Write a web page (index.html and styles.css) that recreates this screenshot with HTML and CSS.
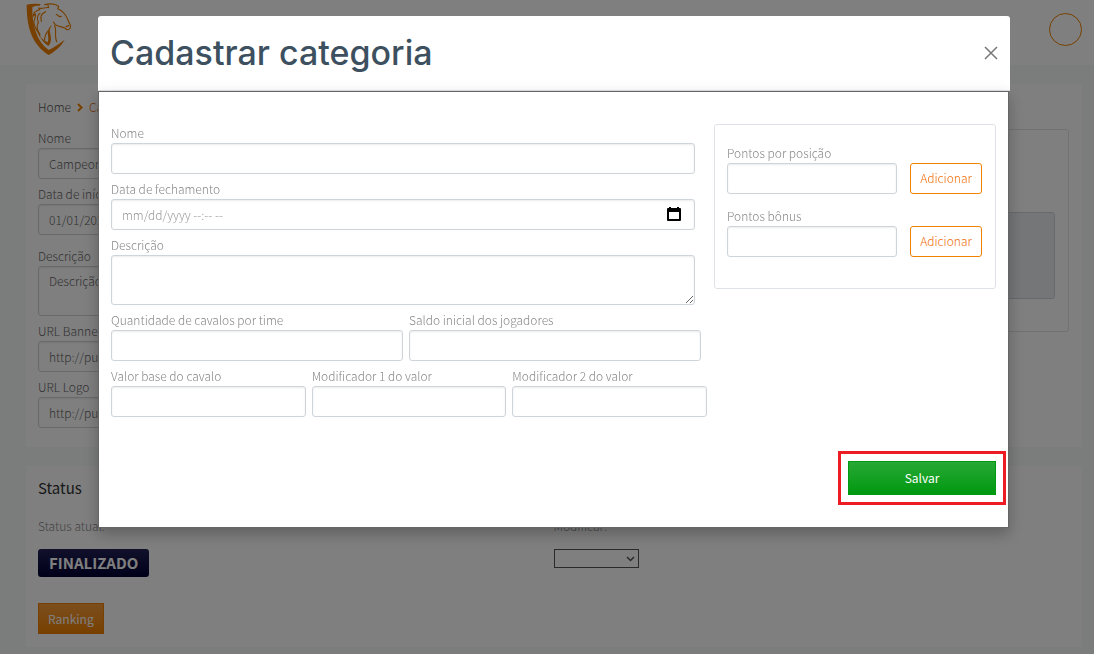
FILE: index.html
```html
<!DOCTYPE html>
<html lang="pt-BR">
<head>
<meta charset="utf-8">
<title>Cadastrar categoria</title>
<link rel="stylesheet" href="styles.css">
</head>
<body>
<div class="page">
  <header class="topbar">
    <svg class="logo" viewBox="6 9 138 156" fill="none" aria-hidden="true">
      <path fill="#f08000" d="M8 14Q24 10 50 12L47 17C36 17 31 18 25 22C24 75 38 125 74 150C90 142 105 131 122 119C111 140 92 155 74 165C28 135 8 90 8 14Z"/>
      <path fill="#f08000" d="M48 109C53 122 62 131 73 138C83 128 82 113 78 98C76 89 79 82 85 76C80 77 74 84 72 93C70 106 76 117 71 127C62 123 54 116 48 109Z"/>
      <path stroke="#f08000" stroke-width="3.500" stroke-linejoin="round" stroke-linecap="round" d="M62 14C78 10 96 12 104 19L101 26C115 32 125 42 130 56L139 76C141 83 137 90 129 89L122 84C112 79 102 80 94 74L88 66M48 109C44 97 31 84 30 68C29 58 37 50 34 42L27 49C28 37 36 32 47 29L44 24C56 29 63 20 74 23L72 16M48 40C34 49 42 60 43 68C36 78 40 94 48 103M65 35C48 42 50 54 52 64M97 43L107 50L112 49M126 80L134 77M92 77C99 91 90 106 98 125M72 93C62 104 61 113 62 120"/>
    </svg>
    <div class="avatar"></div>
  </header>
  <main class="content">
    <section class="card">
      <nav class="crumbs">
        <a class="crumb" href="#">Home</a>
        <svg class="chevron" viewBox="0 0 6 9" fill="none" stroke="#f08000" stroke-width="2"><path d="M1 1L4.500 4.500L1 8"/></svg>
        <a class="crumb crumb-current" href="#">Campeonatos</a>
      </nav>
      <div class="champ-grid">
        <div class="fields">
          <div class="field"><label for="c-nome">Nome</label><input id="c-nome" class="control" value="Campeonato"></div>
          <div class="field field-spaced"><label for="c-data">Data de início</label><input id="c-data" class="control" value="01/01/2022"></div>
          <div class="field"><label for="c-desc">Descrição</label><textarea id="c-desc" class="control area">Descrição</textarea></div>
          <div class="field"><label for="c-banner">URL Banner</label><input id="c-banner" class="control" value="http://pucminas"></div>
          <div class="field"><label for="c-logo">URL Logo</label><input id="c-logo" class="control" value="http://pucminas"></div>
        </div>
        <div class="preview"><div class="preview-box"></div></div>
      </div>
    </section>
    <section class="card status-card">
      <h2 class="status-title">Status</h2>
      <div class="status-grid">
        <div class="status-col">
          <span class="status-label">Status atual:</span>
          <span class="badge">FINALIZADO</span>
        </div>
        <div class="status-col">
          <label class="status-label" for="modificar">Modificar:</label>
          <div class="select-wrap">
            <select id="modificar" class="select"><option></option></select>
            <svg class="select-arrow" viewBox="0 0 9 6" fill="none" stroke="#555" stroke-width="1.500"><path d="M1 1L4.500 4.500L8 1"/></svg>
          </div>
        </div>
      </div>
      <button class="btn-rank" type="button">Ranking</button>
    </section>
  </main>
</div>
<div class="overlay">
  <div class="modal" role="dialog" aria-labelledby="modal-title">
    <header class="modal-head">
      <h1 id="modal-title" class="modal-title">Cadastrar categoria</h1>
      <button class="close" type="button" aria-label="Fechar"><svg class="close-icon" viewBox="0 0 14 14" stroke="#777" stroke-width="1.500"><path d="M1 1L13 13M13 1L1 13"/></svg></button>
    </header>
    <form class="modal-body">
      <div class="modal-grid">
        <div class="fields">
          <div class="field"><label for="nome">Nome</label><input id="nome" class="control"></div>
          <div class="field">
            <label for="fechamento">Data de fechamento</label>
            <div class="date-wrap">
              <input id="fechamento" class="control" placeholder="mm/dd/yyyy --:-- --">
              <button class="date-btn" type="button" aria-label="Abrir calendário"><svg class="date-icon" viewBox="0 0 14 15"><path fill="#000" fill-rule="evenodd" d="M2 1V0H4V1H10V0H12V1H13Q14 1 14 2V13Q14 14 13 14H1Q0 14 0 13V2Q0 1 1 1ZM2 5V12H12V5Z"/></svg></button>
            </div>
          </div>
          <div class="field"><label for="descricao">Descrição</label><textarea id="descricao" class="control area"></textarea></div>
          <div class="row row-two">
            <div class="field"><label for="qtd">Quantidade de cavalos por time</label><input id="qtd" class="control"></div>
            <div class="field"><label for="saldo">Saldo inicial dos jogadores</label><input id="saldo" class="control"></div>
          </div>
          <div class="row row-three">
            <div class="field"><label for="valor">Valor base do cavalo</label><input id="valor" class="control"></div>
            <div class="field"><label for="mod1">Modificador 1 do valor</label><input id="mod1" class="control"></div>
            <div class="field"><label for="mod2">Modificador 2 do valor</label><input id="mod2" class="control"></div>
          </div>
        </div>
        <div class="points">
          <div class="point-row">
            <div class="field"><label for="pos">Pontos por posição</label><input id="pos" class="control"></div>
            <button class="btn-add" type="button">Adicionar</button>
          </div>
          <div class="point-row">
            <div class="field"><label for="bonus">Pontos bônus</label><input id="bonus" class="control"></div>
            <button class="btn-add" type="button">Adicionar</button>
          </div>
        </div>
      </div>
      <div class="actions"><button class="btn-save" type="button">Salvar</button></div>
    </form>
  </div>
</div>
</body>
</html>
```

FILE: styles.css
```css
* { box-sizing: border-box; }
body {
  margin: 0;
  overflow: hidden;
  background: #f4faf7;
  color: #888;
  font: 300 12px/20px "Noto Sans CJK SC", "Noto Sans", sans-serif;
}
button, input, textarea, select { font: inherit; color: inherit; }
.page { min-height: 100vh; }
.topbar {
  display: flex;
  justify-content: space-between;
  align-items: flex-start;
  height: 65px;
  padding: 3px 12px 0 26px;
  background: #fff;
}
.logo { width: 46px; height: 52px; }
.avatar {
  width: 33px;
  height: 33px;
  margin-top: 10px;
  border: 1px solid #f08000;
  border-radius: 50%;
}
.content {
  display: grid;
  gap: 19px;
  padding: 19px 12px 7px 26px;
}
.card { padding: 13px 13px 14px 12px; background: #fff; }
.crumbs { display: flex; align-items: center; gap: 6px; margin-bottom: 11px; }
.crumb { color: #555; text-decoration: none; }
.crumb-current { color: #e06a20; }
.chevron { width: 6px; height: 9px; }
.champ-grid { display: grid; grid-template-columns: 1fr 340px; gap: 20px; align-items: start; }
.preview { height: 203px; padding: 82px 13px 0; margin-top: 1px; border: 1px solid #dee2e6; border-radius: 3px; }
.preview-box { height: 87px; background: #e9ecef; border: 1px solid #ced4da; border-radius: 3px; }

.field { display: flex; flex-direction: column; min-width: 0; margin-bottom: 5px; }
.field-spaced { margin-bottom: 11px; }
.page .field { color: #666; }
.control {
  width: 100%;
  height: 31px;
  padding: 0 10px 1px;
  background: #fff;
  border: 1px solid #ced4da;
  border-radius: 3px;
  box-shadow: inset 0 1px 2px rgba(0, 0, 0, .08);
}
.control::placeholder { color: #999; opacity: 1; }
.area { display: block; height: 50px; padding: 4px 10px; }
.date-wrap { position: relative; display: flex; }
.date-btn {
  position: absolute;
  top: 8px;
  right: 14px;
  display: flex;
  padding: 0;
  border: 0;
  background: none;
}
.date-icon { width: 14px; height: 15px; }

.status-card { padding: 12px 13px 13px 12px; }
.status-title { margin: 0 0 18px; color: #333; font-size: 15px; font-weight: 400; line-height: 20px; }
.status-grid { display: grid; grid-template-columns: 1fr 1fr; }
.status-col { display: flex; flex-direction: column; align-items: flex-start; gap: 13px; }
.badge {
  padding: 0 11px;
  border-radius: 3px;
  background: linear-gradient(#222258, #000033);
  color: #fff;
  font-size: 15px;
  font-weight: 700;
  line-height: 28px;
}
.select-wrap { position: relative; display: flex; }
.select {
  appearance: none;
  width: 85px;
  height: 19px;
  padding: 0 4px;
  background: #fff;
  border: 1px solid #555;
  border-radius: 0;
}
.select-arrow { position: absolute; top: 7px; right: 4px; width: 9px; height: 6px; }
.btn-rank {
  height: 31px;
  margin-top: 26px;
  padding: 0 9px;
  border: 1px solid #f08000;
  background: linear-gradient(#f79d3c, #f08000);
  color: #fff;
  font-weight: 400;
}

.overlay {
  position: fixed;
  inset: 0;
  padding: 16px 84px 0 98px;
  background: rgba(0, 0, 0, .5);
}
.modal-head {
  display: flex;
  align-items: center;
  justify-content: space-between;
  padding: 17px 12px 17px 12px;
  border-bottom: 1px solid #dee2e6;
  border-radius: 3px 3px 0 0;
  background: #fff;
}
.modal-title {
  margin: 0;
  color: #3d5060;
  font: 500 34px/40px Inter, sans-serif;
}
.close { display: flex; padding: 0; border: 0; background: none; }
.close-icon { width: 14px; height: 14px; }
.modal-body {
  margin-right: 1px;
  padding: 31px 12px 32px 12px;
  border: 1px solid #666;
  border-left-color: #666;
  background: #fff;
  box-shadow: 0 6px 14px rgba(0, 0, 0, .25);
}
.modal-grid { display: grid; grid-template-columns: 1fr 282px; gap: 19px; align-items: start; }
.row { display: grid; gap: 6px; }
.row-two { grid-template-columns: repeat(2, 1fr); margin-right: -6px; }
.row-three { grid-template-columns: repeat(3, 1fr); margin-right: -12px; }
.points {
  display: grid;
  gap: 12px;
  margin-top: 1px;
  padding: 18px 13px 31px 12px;
  border: 1px solid #dee2e6;
  border-radius: 3px;
}
.point-row { display: grid; grid-template-columns: 1fr 72px; gap: 13px; align-items: end; }
.point-row .field { margin: 0; }
.btn-add {
  height: 31px;
  padding: 0 0 1px;
  border: 1px solid #f08000;
  border-radius: 3px;
  background: #fff;
  color: #f07010;
}
.actions { display: flex; justify-content: flex-end; margin-top: 39px; }
.btn-save {
  width: 148px;
  height: 34px;
  border: 1px solid #009910;
  background: linear-gradient(#28a835, #009910);
  color: #fff;
  font-weight: 400;
  outline: 3px solid #ed1c24;
  outline-offset: 7px;
}
```
